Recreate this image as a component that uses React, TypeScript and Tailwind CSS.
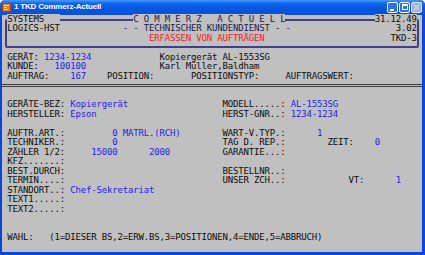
import clsx from 'clsx';

type Tone = 'k' | 'b' | 'r' | 'n';
type Seg = [number, string, Tone?];

const toneClass: Record<Tone, string> = {
  k: 'text-[#0c0c0c]',
  b: 'text-[#2424ec]',
  r: 'text-[#f01c1c]',
  n: 'text-[#1a1a50]',
};

// one terminal row, segments placed at their column
function Row({ segs = [], cover = false }: { segs?: Seg[]; cover?: boolean }) {
  let col = 0;
  const out: React.ReactNode[] = [];
  segs.forEach(([at, text, tone = 'k'], i) => {
    if (at > col) out.push(<span key={'g' + i}>{' '.repeat(at - col)}</span>);
    out.push(
      <span key={i} className={clsx(toneClass[tone], cover && 'bg-[#c0c0c0]')}>
        {text}
      </span>
    );
    col = at + text.length;
  });
  return <div className="h-[9.5px] leading-[9.5px] whitespace-pre">{out}</div>;
}

const header: Seg[][] = [
  [[1, 'SYSTEMS   '], [25, 'C O M M E R Z   A C T U E L L', 'n'], [71, '31.12.49']],
  [[1, 'LOGICS-HST'], [23, '- - TECHNISCHER KUNDENDIENST - -', 'n'], [75, '3.02']],
  [[28, 'ERFASSEN VON AUFTRÄGEN', 'r'], [74, 'TKD-3']],
  [],
];

const top: Seg[][] = [
  [[1, 'GERÄT:'], [8, '1234-1234', 'b'], [30, 'Kopiergerät AL-1553SG']],
  [[1, 'KUNDE:'], [10, '100100', 'b'], [30, 'Karl Müller,Baldham']],
  [[1, 'AUFTRAG:'], [13, '167', 'b'], [20, 'POSITION:'], [36, 'POSITIONSTYP:'], [54, 'AUFTRAGSWERT:']],
];

const body: Seg[][] = [
  [],
  [[1, 'GERÄTE-BEZ:'], [13, 'Kopiergerät', 'b'], [42, 'MODELL.....:'], [55, 'AL-1553SG', 'b']],
  [[1, 'HERSTELLER:'], [13, 'Epson', 'b'], [42, 'HERST-GNR..:'], [55, '1234-1234', 'b']],
  [],
  [[1, 'AUFTR.ART.:'], [21, '0', 'b'], [23, 'MATRL.(RCH)', 'b'], [42, 'WART-V.TYP.:'], [60, '1', 'b']],
  [[1, 'TECHNIKER.:'], [21, '0', 'b'], [42, 'TAG D. REP.:'], [62, 'ZEIT:'], [71, '0', 'b']],
  [[1, 'ZÄHLER 1/2:'], [17, '15000', 'b'], [28, '2000', 'b'], [42, 'GARANTIE...:']],
  [[1, 'KFZ.......:']],
  [[1, 'BEST.DURCH:'], [42, 'BESTELLNR..:']],
  [[1, 'TERMIN....:'], [42, 'UNSER ZCH..:'], [66, 'VT:'], [75, '1', 'b']],
  [[1, 'STANDORT..:'], [13, 'Chef-Sekretariat', 'b']],
  [[1, 'TEXT1.....:']],
  [[1, 'TEXT2.....:']],
  [],
  [],
  [[1, 'WAHL:'], [9, '(1=DIESER BS,2=ERW.BS,3=POSITIONEN,4=ENDE,5=ABBRUCH)']],
  [],
];

function TitleBar() {
  return (
    <div className="h-[15px] flex items-center bg-[linear-gradient(to_bottom,#4a9cff_0%,#0f66ec_22%,#0656e0_60%,#0a4fd4_100%)] pl-[2px] pr-[3px]">
      {/* app icon */}
      <svg width="9" height="9" viewBox="0 0 9 9" className="shrink-0">
        <rect x="0.5" y="0.5" width="8" height="8" fill="#f07a1a" stroke="#b0400a" />
        <rect x="2" y="2" width="5" height="1" fill="#fff3c0" />
        <rect x="2" y="4" width="3" height="1" fill="#fff3c0" />
        <rect x="2" y="6" width="4" height="1" fill="#fff3c0" />
      </svg>
      <span className="ml-[3px] text-white font-bold font-['Liberation_Sans',sans-serif] text-[8px] tracking-[-0.2px] leading-none">
        1 TKD Commerz-Actuell
      </span>
      <div className="ml-auto flex gap-[1px]">
        <div className="w-[11px] h-[11px] rounded-[2px] border border-white bg-[#2a72f0] relative">
          <div className="absolute left-[2px] bottom-[1px] w-[4px] h-[2px] bg-white" />
        </div>
        <div className="w-[11px] h-[11px] rounded-[2px] border border-white bg-[#2a72f0] flex items-center justify-center">
          <div className="w-[6px] h-[6px] border border-white border-t-2" />
        </div>
        <div className="w-[11px] h-[11px] rounded-[2px] border border-[#dfe6f6] bg-[#9db0dc] flex items-center justify-center">
          <svg width="7" height="7" viewBox="0 0 7 7">
            <path d="M1 1L6 6M6 1L1 6" stroke="#c9d4ee" strokeWidth="1.4" />
          </svg>
        </div>
      </div>
    </div>
  );
}

export default function App() {
  return (
    <div className="w-[425px] h-[255px] flex flex-col bg-[#0848d8] rounded-t-[5px] overflow-hidden">
      <TitleBar />
      <div className="flex-1 pl-[2px] pr-[3px] pb-[3px]">
        <div className="h-full bg-[#c0c0c0] font-['DejaVu_Sans_Mono',monospace] text-[9px] tracking-[-0.17px] text-[#0c0c0c]">
          {/* header box */}
          <div className="relative">
            <div className="absolute top-[4.5px] h-[29px] left-[2.6px] right-[2.6px] border-2 border-[#40408a] rounded-[2px]" />
            <div className="relative">
              {header.map((segs, i) => (
                <Row key={i} segs={segs} cover={i === 0} />
              ))}
            </div>
          </div>

          {top.map((segs, i) => (
            <Row key={i} segs={segs} />
          ))}

          {/* separator */}
          <div className="h-[9.5px] flex items-center">
            <div className="w-full h-[3px] border-y border-[#3c3c3c]" />
          </div>

          {body.map((segs, i) => (
            <Row key={i} segs={segs} />
          ))}
        </div>
      </div>
    </div>
  );
}
